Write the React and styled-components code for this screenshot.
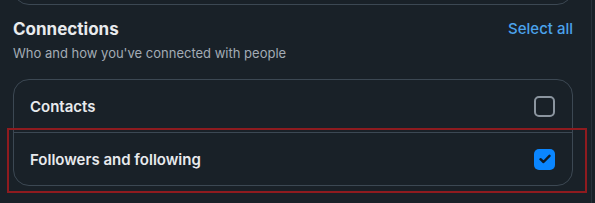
import styled, { createGlobalStyle } from "styled-components";

const GlobalStyle = createGlobalStyle`
  html, body {
    margin: 0;
    padding: 0;
    background: #192128;
    overflow: hidden;
  }
  body {
    font-family: Inter, "Noto Sans", sans-serif;
    color: #e4e6eb;
    -webkit-font-smoothing: antialiased;
  }
`;

const items = [
  { id: "contacts", label: "Contacts", checked: false },
  { id: "followers", label: "Followers and following", checked: true },
];

export default function App() {
  return (
    <>
      <GlobalStyle />
      <Page>
        <Main>
          <PrevClip>
            <PrevCard />
          </PrevClip>
          <Header>
            <div>
              <Title>Connections</Title>
              <Subtitle>Who and how you've connected with people</Subtitle>
            </div>
            <SelectAll>Select all</SelectAll>
          </Header>
          <List>
            {items.map((item) => (
              <Row key={item.id}>
                <Label>{item.label}</Label>
                <Checkbox $checked={item.checked}>
                  {item.checked && (
                    <svg width="12" height="10" viewBox="0 0 12 10">
                      <path
                        d="M1.5 5.2 L4.5 8 L10.5 1.8"
                        fill="none"
                        stroke="#0f1a24"
                        strokeWidth="2.4"
                        strokeLinecap="round"
                        strokeLinejoin="round"
                      />
                    </svg>
                  )}
                </Checkbox>
              </Row>
            ))}
            <Highlight />
          </List>
        </Main>
        <Gutter />
      </Page>
    </>
  );
}

const Page = styled.div`
  display: flex;
  width: 595px;
  height: 203px;
`;

const Main = styled.div`
  width: 591px;
  padding: 0 18px 0 13px;
  box-sizing: border-box;
`;

const Gutter = styled.div`
  flex: 1;
  border-left: 1px solid #27313a;
  background: #182027;
`;

const PrevClip = styled.div`
  height: 5px;
  overflow: hidden;
  display: flex;
  align-items: flex-end;
`;

const PrevCard = styled.div`
  flex: 1;
  height: 40px;
  border: 1px solid #3c4853;
  border-radius: 16px;
  box-sizing: border-box;
`;

const Header = styled.div`
  display: flex;
  justify-content: space-between;
  align-items: flex-start;
  margin-top: 13px;
`;

const Title = styled.div`
  font-size: 17px;
  line-height: 22px;
  font-weight: 700;
  color: #e8eaed;
`;

const Subtitle = styled.div`
  margin-top: 4px;
  font-size: 13px;
  line-height: 18px;
  color: #a3acb5;
`;

const SelectAll = styled.div`
  font-size: 15px;
  line-height: 22px;
  font-weight: 500;
  color: #4ba3ec;
  cursor: pointer;
`;

const List = styled.div`
  position: relative;
  margin-top: 17px;
  border: 1px solid #3c4853;
  border-radius: 16px;
`;

const Row = styled.div`
  display: flex;
  align-items: center;
  justify-content: space-between;
  height: 52px;
  padding: 0 17px 0 16px;

  & + & {
    border-top: 1px solid #3c4853;
  }
`;

const Label = styled.span`
  font-size: 15px;
  font-weight: 600;
  color: #e8eaed;
`;

const Checkbox = styled.span`
  display: flex;
  align-items: center;
  justify-content: center;
  width: 21px;
  height: 21px;
  box-sizing: border-box;
  border-radius: 5px;
  border: ${({ $checked }) => ($checked ? "none" : "2px solid #8b959f")};
  background: ${({ $checked }) => ($checked ? "#0a86ff" : "transparent")};
`;

const Highlight = styled.div`
  position: absolute;
  left: -7px;
  right: -15px;
  top: 48px;
  height: 61px;
  border: 2px solid #8e1b1f;
  pointer-events: none;
`;
